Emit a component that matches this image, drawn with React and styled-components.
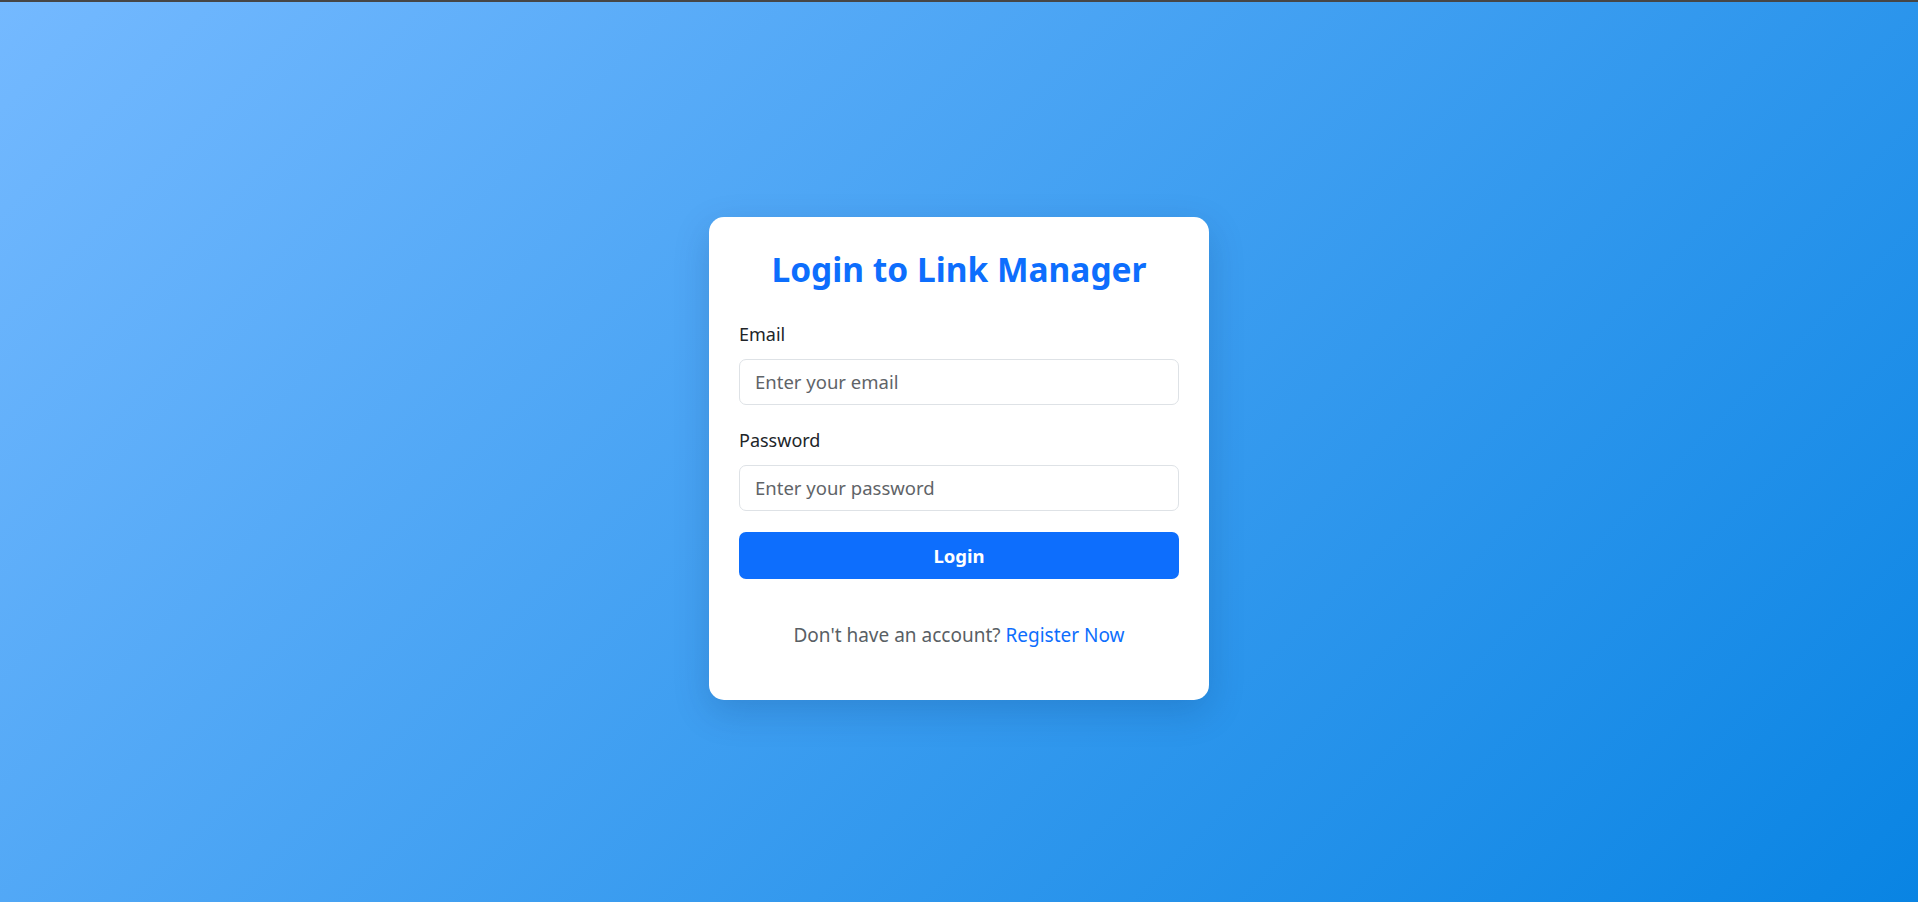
import React from 'react'
import styled, { createGlobalStyle } from 'styled-components'

const GlobalStyle = createGlobalStyle`
  * {
    box-sizing: border-box;
  }
  html, body {
    margin: 0;
    padding: 0;
  }
  body {
    font-family: 'Noto Sans', 'Open Sans', sans-serif;
    color: #212529;
    border-top: 2px solid #464646;
  }
`

const Page = styled.main`
  min-height: 900px;
  display: flex;
  align-items: center;
  justify-content: center;
  padding-top: 12px;
  background: linear-gradient(135deg, #74b9ff 0%, #0984e3 100%);
`

const Card = styled.section`
  width: 500px;
  background: #fff;
  border-radius: 15px;
  padding: 29px 30px 32px;
  box-shadow: 0 12px 36px rgba(0, 40, 90, 0.18);
`

const Title = styled.h2`
  margin: 0 0 28px;
  text-align: center;
  font-size: 33.5px;
  line-height: 46px;
  font-weight: 700;
  color: #0d6efd;
`

const Field = styled.div`
  margin-bottom: ${(p) => p.gap || 21}px;
`

const Label = styled.label`
  display: block;
  font-size: 18px;
  line-height: 29px;
  margin-bottom: 10px;
  color: #212529;
`

const Input = styled.input`
  display: block;
  width: 100%;
  height: 46px;
  padding: 7px 15px;
  font-family: inherit;
  font-size: 18.5px;
  color: #212529;
  background: #fff;
  border: 1px solid #dee2e6;
  border-radius: 7px;
  outline: none;

  &::placeholder {
    color: #5f6468;
  }
`

const Button = styled.button`
  display: block;
  width: 100%;
  height: 47px;
  border: none;
  border-radius: 7px;
  background: #0d6efd;
  color: #fff;
  font-family: inherit;
  font-size: 18.5px;
  font-weight: 700;
  cursor: pointer;
`

const Footer = styled.p`
  margin: 42px 0 18px;
  text-align: center;
  font-size: 19px;
  line-height: 29px;
  color: #595f65;
`

const RegisterLink = styled.a`
  color: #0d6efd;
  text-decoration: none;
`

export default function App() {
  return (
    <>
      <GlobalStyle />
      <Page>
        <Card>
          <Title>Login to Link Manager</Title>
          <form onSubmit={(e) => e.preventDefault()}>
            <Field>
              <Label htmlFor='email'>Email</Label>
              <Input id='email' type='email' placeholder='Enter your email' />
            </Field>
            <Field>
              <Label htmlFor='password'>Password</Label>
              <Input
                id='password'
                type='password'
                placeholder='Enter your password'
              />
            </Field>
            <Button type='submit'>Login</Button>
          </form>
          <Footer>
            Don't have an account? <RegisterLink href='#'>Register Now</RegisterLink>
          </Footer>
        </Card>
      </Page>
    </>
  )
}
